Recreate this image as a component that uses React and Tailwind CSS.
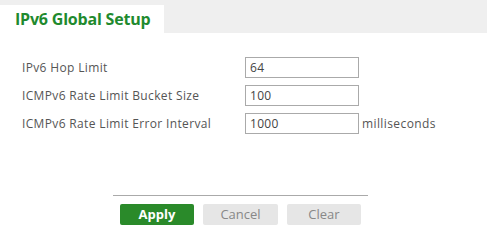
export default function App() {
  const rows = [
    { label: 'IPv6 Hop Limit', value: '64' },
    { label: 'ICMPv6 Rate Limit Bucket Size', value: '100' },
    { label: 'ICMPv6 Rate Limit Error Interval', value: '1000', unit: 'milliseconds' },
  ]

  return (
    <div className="h-[242px] w-[487px] bg-white font-['Open_Sans',sans-serif] text-[#555]">
      <div className="flex h-[33px] items-end bg-[#efefef]">
        <div className="flex h-[28px] w-[164px] items-center bg-white pl-[15px]">
          <span className="text-[16px] font-bold leading-none tracking-[-0.2px] text-[#1f8a2e]">IPv6 Global Setup</span>
        </div>
      </div>

      <div className="flex flex-col gap-[7px] pl-[22px] pt-[24px]">
        {rows.map((r) => (
          <div key={r.label} className="flex h-[21px] items-center">
            <span className="w-[223px] text-[12px] tracking-[0.35px]">{r.label}</span>
            <div className="flex h-[21px] w-[114px] items-center border border-[#aaa] bg-white px-[4px] text-[12px] tracking-[0.3px] text-[#444]">
              {r.value}
            </div>
            {r.unit && <span className="ml-[3px] text-[12px] tracking-[0.4px]">{r.unit}</span>}
          </div>
        ))}
      </div>

      <div className="ml-[113px] mt-[61px] w-[255px] border-t border-[#aaa] pl-[7px] pt-[8px]">
        <div className="flex gap-[9px]">
          <button className="h-[21px] w-[74px] rounded-[2px] bg-[#2a8a2a] text-[13px] font-bold text-white">Apply</button>
          <button className="h-[21px] w-[75px] rounded-[2px] bg-[#e6e6e6] text-[13px] text-[#888]">Cancel</button>
          <button className="h-[21px] w-[74px] rounded-[2px] bg-[#e6e6e6] text-[13px] text-[#888]">Clear</button>
        </div>
      </div>
    </div>
  )
}
